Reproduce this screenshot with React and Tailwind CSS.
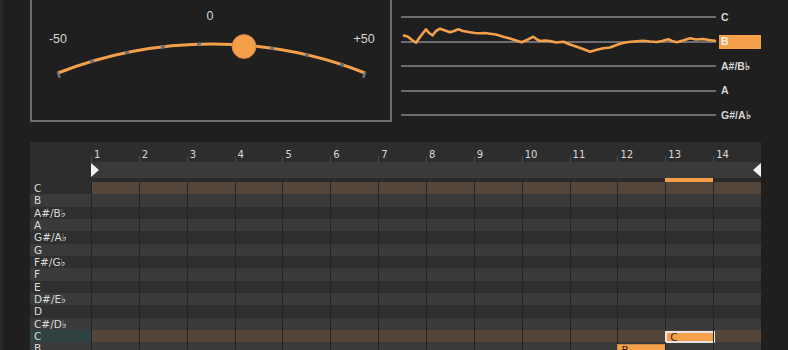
import React from "react";

const ORANGE = "#f4a04b";
const NOTES = ["C", "B", "A#/B♭", "A", "G#/A♭", "G", "F#/G♭", "F", "E", "D#/E♭", "D", "C#/D♭", "C", "B"];
const COLS = Array.from({ length: 14 }, (_, i) => i + 1);

const WAVE = [
  [404, 35.5], [408, 36.7], [412, 40], [416, 42.7], [420, 37], [426, 29.3], [429, 33], [432.7, 35.3], [436, 31],
  [440, 28.7], [445, 30.5], [450, 32.3], [454, 31], [458.3, 29.3], [463, 31], [470, 32.3], [475, 33], [480, 33.3],
  [485, 33], [490, 33.7], [496, 34.5], [503.3, 36.7], [510, 38.5], [516, 40.5], [521.7, 42.3], [527, 40],
  [533.3, 36.7], [537, 39.5], [540, 41], [545, 40.5], [550, 41], [556, 42.5], [563.3, 41.7], [570, 44.5],
  [576.7, 46.7], [583, 49], [590, 51.7], [596, 50], [603.3, 48.3], [610, 47.5], [616.7, 45], [621, 43.5],
  [626.7, 42.3], [634, 41.5], [643.3, 40.7], [650, 41.5], [656.7, 42], [662, 41], [668.3, 39.3], [672, 41],
  [676.7, 42.3], [683, 40.5], [690, 38.3], [696, 39.5], [703.3, 39], [709, 40], [715, 40.7],
];

function Gauge() {
  const cx = 211.5;
  const R = 420.7;
  const cy = 44 + R;
  const pt = (x) => [x, cy - Math.sqrt(R * R - (x - cx) * (x - cx))];
  const ticks = [92, 127, 163, 199, 272, 307, 342].map((x) => {
    const [px, py] = pt(x);
    const dx = (px - cx) / R;
    const dy = (py - cy) / R;
    const tx = -dy;
    const ty = dx;
    return { x1: px - tx * 2, y1: py - ty * 2, x2: px + tx * 2, y2: py + ty * 2 };
  });
  const caps = [58, 365].map((x) => {
    const [px, py] = pt(x);
    const dx = (px - cx) / R;
    const dy = (py - cy) / R;
    return { x1: px, y1: py, x2: px - dx * 4, y2: py - dy * 4 };
  });
  return (
    <svg viewBox="32 0 358 120" width="358" height="120" className="block">
      <text x="210" y="19.5" textAnchor="middle" fill="#d6d6d6" fontSize="12.5" fontFamily="Liberation Sans, Arial, sans-serif">0</text>
      <text x="58" y="42.5" textAnchor="middle" fill="#d6d6d6" fontSize="12.5" fontFamily="Liberation Sans, Arial, sans-serif">-50</text>
      <text x="364" y="42.5" textAnchor="middle" fill="#d6d6d6" fontSize="12.5" fontFamily="Liberation Sans, Arial, sans-serif">+50</text>
      <path d={`M 58 ${pt(58)[1]} A ${R} ${R} 0 0 1 365 ${pt(365)[1]}`} fill="none" stroke={ORANGE} strokeWidth="3" />
      {ticks.map((t, i) => (
        <line key={i} {...t} stroke="#6c7078" strokeWidth="3.2" />
      ))}
      {caps.map((t, i) => (
        <line key={"c" + i} {...t} stroke="#6c7078" strokeWidth="2.5" strokeLinecap="round" />
      ))}
      <circle cx="244" cy="46.5" r="12" fill={ORANGE} stroke="#c9853e" strokeWidth="0.8" />
    </svg>
  );
}

function PitchPanel() {
  const labels = ["C", "B", "A#/B♭", "A", "G#/A♭"];
  return (
    <div className="relative flex-1 h-full">
      <div className="flex flex-col pt-[4.75px]">
        {labels.map((l) => (
          <div key={l} className="flex items-center h-[24.5px]">
            <div className="ml-[9px] w-[315px] h-[2px] bg-[#6c6c72]" />
            {l === "B" ? (
              <div className="ml-[3px] w-[42px] h-[14px] flex items-center pl-[2px] bg-[#f4a04b] text-[#f6f1ea] text-[10.5px] font-bold leading-none">
                {l}
              </div>
            ) : (
              <div className="ml-[5px] text-[#d6d6d6] text-[10.5px] font-bold leading-none">{l}</div>
            )}
          </div>
        ))}
      </div>
      <svg viewBox="392 0 396 122" width="396" height="122" className="absolute left-0 top-0 pointer-events-none">
        <polyline
          points={WAVE.map((p) => p.join(",")).join(" ")}
          fill="none"
          stroke={ORANGE}
          strokeWidth="2.6"
          strokeLinejoin="round"
          strokeLinecap="round"
        />
      </svg>
    </div>
  );
}

function Grid() {
  return (
    <div className="w-[731px] flex flex-col text-[10.5px] text-[#dadada] font-['DejaVu_Sans',sans-serif]">
      {/* header numbers */}
      <div className="flex h-[20px] bg-[#2d2d2d]">
        <div className="w-[61px] shrink-0" />
        <div className="flex-1 grid grid-cols-14">
          {COLS.map((n) => (
            <div key={n} className="flex items-end">
              <div className="w-px h-[6px] bg-[#4a4a4a]" />
              <span className="ml-[2px] mb-[2px] leading-none text-[10px]">{n}</span>
            </div>
          ))}
        </div>
      </div>
      {/* ruler */}
      <div className="flex h-[16px] bg-[#2d2d2d]">
        <div className="w-[61px] shrink-0" />
        <div className="flex-1 bg-[#3a3a3a] flex items-center justify-between">
          <div className="w-0 h-0 border-y-[7px] border-y-transparent border-l-[8px] border-l-[#f2f2f2]" />
          <div className="w-0 h-0 border-y-[7px] border-y-transparent border-r-[8px] border-r-[#f2f2f2]" />
        </div>
      </div>
      {/* gap strip */}
      <div className="flex h-[4px] bg-[#2d2d2d]">
        <div className="w-[61px] shrink-0" />
        <div className="flex-1 grid grid-cols-14 bg-[#2a2a2a]">
          {COLS.map((n) => (
            <div key={n} className={n === 13 ? "bg-[#f4a04b]" : ""} />
          ))}
        </div>
      </div>
      {/* rows */}
      {NOTES.map((note, r) => {
        const brown = r === 0 || r === 12;
        const light = r % 2 === 1;
        const labelBg = r === 12 ? "bg-[#2f4242]" : r === 0 ? "bg-[#2d2d2d]" : light ? "bg-[#3a3a3a]" : "bg-[#2f2f2f]";
        const cellBg = brown ? "bg-[#54463a]" : light ? "bg-[#3a3a3a]" : "bg-[#2f2f2f]";
        return (
          <div key={r} className="flex h-[12.33px] shrink-0">
            <div className={`w-[61px] shrink-0 pl-[4px] flex items-center leading-none ${labelBg}`}>{note}</div>
            <div className={`flex-1 grid grid-cols-14 ${cellBg}`}>
              {COLS.map((n) => (
                <div key={n} className="relative border-l border-[#242424]">
                  {r === 12 && n === 13 && (
                    <div className="absolute left-[-1px] top-[1px] w-[50px] h-[12px] bg-[#f4a04b] border-2 border-[#e6e6e6] pl-[3px] flex items-center text-[#3a2510] leading-none">
                      C
                    </div>
                  )}
                  {r === 13 && n === 12 && (
                    <div className="absolute left-[-1px] top-[1.5px] w-[49px] h-[12px] bg-[#f4a04b] border border-[#c98a45] pl-[3px] flex items-center text-[#3a2510] leading-none">
                      B
                    </div>
                  )}
                </div>
              ))}
            </div>
          </div>
        );
      })}
    </div>
  );
}

export default function App() {
  return (
    <div className="w-[788px] h-[350px] overflow-hidden bg-[#1f1f1f] flex font-['Liberation_Sans',Arial,sans-serif]">
      <div className="w-[3px] shrink-0 bg-[#282828]" />
      <div className="flex flex-col pl-[27px] w-[785px] shrink-0">
        <div className="flex h-[122px] shrink-0">
          <div className="w-[362px] h-full border-x-2 border-b-2 border-[#6c6c72] shrink-0">
            <Gauge />
          </div>
          <PitchPanel />
        </div>
        <div className="h-[20px] shrink-0" />
        <Grid />
      </div>
    </div>
  );
}
